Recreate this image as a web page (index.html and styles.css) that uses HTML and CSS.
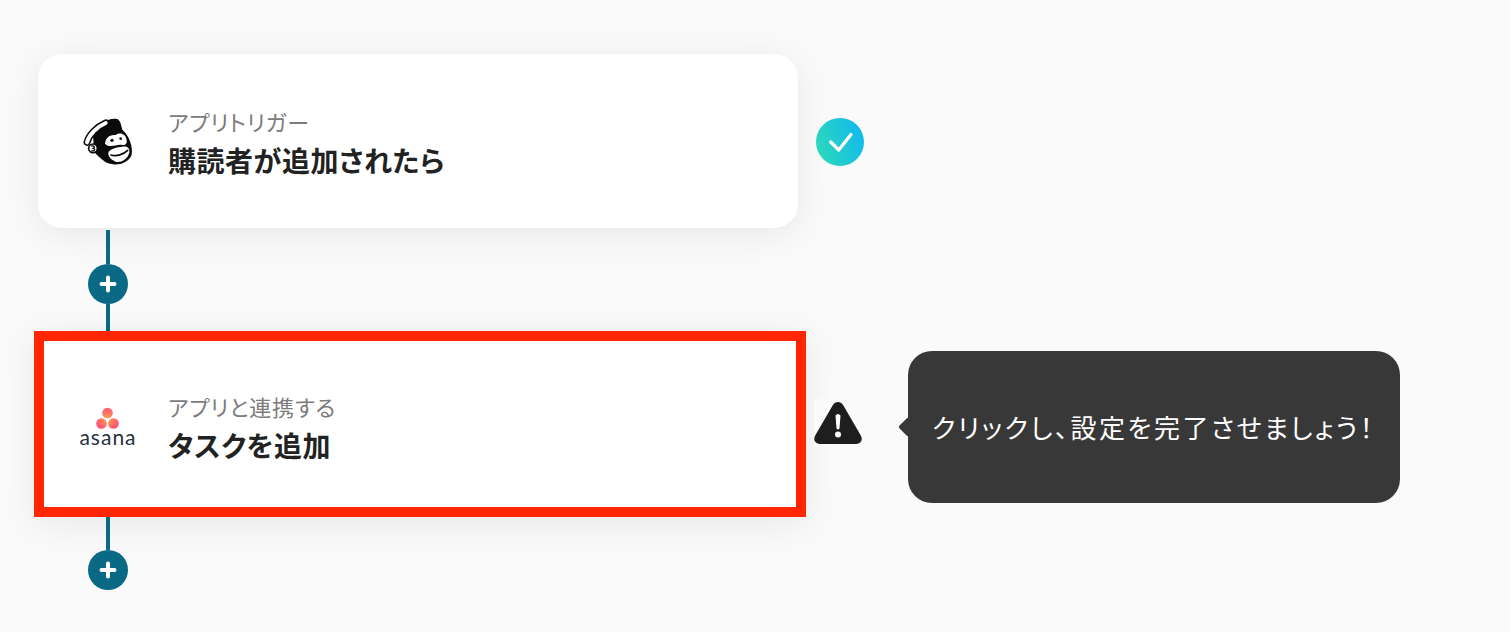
FILE: index.html
```html
<!DOCTYPE html>
<html lang="ja">
<head>
<meta charset="utf-8">
<title>フロー</title>
<link rel="stylesheet" href="styles.css">
</head>
<body>
<main class="flow">
  <section class="row row-first">
    <div class="card">
      <div class="app-icon">
        <svg class="chimp" viewBox="40 33 150 150" width="50" height="50" aria-hidden="true">
          <path class="ink" d="M70 92C82 62 112 38 142 42C152 46 154 58 158 74C178 92 192 126 185 152C172 178 134 186 106 170C92 160 84 152 74 142Z"/>
          <path class="band-out" d="M52 112C58 90 80 66 108 54"/>
          <path class="band-in" d="M52 112C58 90 80 66 108 54"/>
          <circle class="ear" cx="70" cy="130" r="13"/>
          <path class="ear-mark" d="M65 123C74 121 77 127 71 130C78 132 76 139 65 137"/>
          <path class="paper" d="M106 116C108 94 124 90 138 90C152 80 168 88 170 102C174 114 168 122 158 120C140 116 122 132 106 116Z"/>
          <circle class="ink" cx="127" cy="106" r="5"/>
          <circle class="ink" cx="153" cy="101" r="4"/>
          <path class="paper" d="M116 148C114 134 134 128 154 126C170 122 181 128 179 142C175 162 156 174 138 170C126 166 118 158 116 148Z"/>
          <path class="smile" d="M124 150C140 156 162 148 174 136"/>
        </svg>
      </div>
      <div class="labels">
        <p class="kicker">アプリトリガー</p>
        <p class="title">購読者が追加されたら</p>
      </div>
    </div>
    <div class="check">
      <svg viewBox="0 0 48 48" width="48" height="48" aria-hidden="true">
        <path class="check-mark" d="M14.700 24L22.700 32L35 16.500"/>
      </svg>
    </div>
  </section>

  <div class="connector">
    <span class="line line-a"></span>
    <span class="plus"><svg viewBox="0 0 40 40" width="40" height="40" aria-hidden="true"><path class="plus-mark" d="M13.500 20H26.500M20 13.500V26.500"/></svg></span>
    <span class="line line-b"></span>
  </div>

  <section class="row row-alert">
    <div class="card card-alert">
      <div class="app-icon">
        <svg class="asana" viewBox="0 0 60 48" width="60" height="48" aria-hidden="true">
          <defs>
            <radialGradient id="asanaDot" gradientUnits="userSpaceOnUse" cx="29.500" cy="19" r="13">
              <stop offset="0" stop-color="#ffa04a"/>
              <stop offset="1" stop-color="#ff4a80"/>
            </radialGradient>
          </defs>
          <circle cx="29.500" cy="13" r="5.300" fill="url(#asanaDot)"/>
          <circle cx="23.500" cy="23.500" r="5.300" fill="url(#asanaDot)"/>
          <circle cx="35.500" cy="23.500" r="5.300" fill="url(#asanaDot)"/>
          <text class="asana-word" x="30" y="45" text-anchor="middle">asana</text>
        </svg>
      </div>
      <div class="labels">
        <p class="kicker">アプリと連携する</p>
        <p class="title">タスクを追加</p>
      </div>
    </div>
    <div class="warn">
      <svg viewBox="0 0 48 42" width="48" height="42" aria-hidden="true">
        <path class="warn-body" d="M24 0C21.500 0 19.800 1.500 18.600 3.500L1.200 33.500C-1.300 38 1.500 42 6 42H42C46.500 42 49.300 38 46.800 33.500L29.400 3.500C28.200 1.500 26.500 0 24 0Z"/>
        <path class="warn-bar" d="M21.500 13.500Q24 10.500 26.500 13.500L25.500 26.500Q24 28.500 22.500 26.500Z"/>
        <circle class="warn-dot" cx="24" cy="32.500" r="3"/>
      </svg>
    </div>
    <div class="tip">クリックし、設定を完了させましょう！</div>
  </section>

  <div class="connector connector-end">
    <span class="line line-c"></span>
    <span class="plus"><svg viewBox="0 0 40 40" width="40" height="40" aria-hidden="true"><path class="plus-mark" d="M13.500 20H26.500M20 13.500V26.500"/></svg></span>
  </div>
</main>
</body>
</html>
```

FILE: styles.css
```css
* { box-sizing: border-box; }
html, body { margin: 0; height: 100%; }
body {
  background: #fafafa;
  color: #222;
  font-family: "Noto Sans CJK JP", "Noto Sans", sans-serif;
  font-feature-settings: "palt";
  overflow: hidden;
}
p { margin: 0; }

.flow {
  display: flex;
  flex-direction: column;
  align-items: flex-start;
  padding: 54px 0 0 38px;
}
.row { display: flex; align-items: center; }

.card {
  width: 760px;
  height: 174px;
  display: flex;
  align-items: center;
  padding-left: 30px;
  background: #fff;
  border-radius: 24px;
  box-shadow: 0 6px 36px rgba(0, 0, 0, .08);
}
.card-alert {
  width: 772px;
  height: 186px;
  margin-left: -4px;
  padding-left: 24px;
  border: 10px solid #ff2600;
  border-radius: 0;
}
.app-icon {
  width: 80px;
  flex: none;
  display: flex;
  justify-content: center;
  margin-right: 20px;
}
.labels { display: flex; flex-direction: column; gap: 5px; padding-top: 2px; }
.card-alert .labels { padding-top: 7px; }
.kicker {
  font-size: 22px;
  line-height: 30px;
  letter-spacing: .8px;
  color: #7c7c7c;
}
.title {
  font-size: 28px;
  line-height: 38px;
  font-weight: 700;
  letter-spacing: .5px;
  color: #222;
}

.chimp { display: block; }
.ink { fill: #0b0b0b; }
.paper { fill: #fff; }
.band-out { fill: none; stroke: #0b0b0b; stroke-width: 21; stroke-linecap: round; }
.band-in { fill: none; stroke: #fff; stroke-width: 12; stroke-linecap: round; }
.ear { fill: #fff; stroke: #0b0b0b; stroke-width: 5; }
.ear-mark { fill: none; stroke: #0b0b0b; stroke-width: 4; }
.smile { fill: none; stroke: #0b0b0b; stroke-width: 5; stroke-linecap: round; }

.asana { display: block; }
.asana-word {
  font-family: "Lato", sans-serif;
  font-size: 21px;
  letter-spacing: 1px;
  fill: #273240;
}

.check {
  width: 48px;
  height: 48px;
  margin-left: 18px;
  margin-top: 2px;
  border-radius: 50%;
  background: linear-gradient(70deg, #2fdcb4, #0fb6f2);
}
.check svg { display: block; }
.check-mark { fill: none; stroke: #fff; stroke-width: 3.200; stroke-linecap: round; stroke-linejoin: round; }

.connector {
  width: 40px;
  margin-left: 50px;
  display: flex;
  flex-direction: column;
  align-items: center;
  padding-top: 2px;
}
.connector-end { padding-top: 0; }
.line { width: 4px; background: #0a6a85; display: block; }
.line-a { height: 34px; }
.line-b { height: 27px; }
.line-c { height: 33px; }
.plus {
  width: 40px;
  height: 40px;
  border-radius: 50%;
  background: #0a6a85;
  display: block;
}
.plus svg { display: block; }
.plus-mark { fill: none; stroke: #fff; stroke-width: 4; stroke-linecap: round; }

.warn {
  margin-left: 8px;
  margin-top: -2px;
  padding: 3px 0;
  background: #fafafa;
}
.warn svg { display: block; overflow: visible; }
.warn-body { fill: #1e1e1e; }
.warn-bar { fill: #fff; }
.warn-dot { fill: #fff; }

.tip {
  position: relative;
  width: 492px;
  height: 152px;
  margin-left: 46px;
  margin-top: 6px;
  display: flex;
  align-items: center;
  padding: 0 0 2px 24px;
  background: #383838;
  border-radius: 24px;
  color: #fff;
  font-size: 26px;
  letter-spacing: 2.500px;
  white-space: nowrap;
}
.tip::before {
  content: "";
  position: absolute;
  left: -7px;
  top: 69px;
  width: 14px;
  height: 14px;
  background: #383838;
  border-radius: 2px;
  transform: rotate(45deg);
}
```
